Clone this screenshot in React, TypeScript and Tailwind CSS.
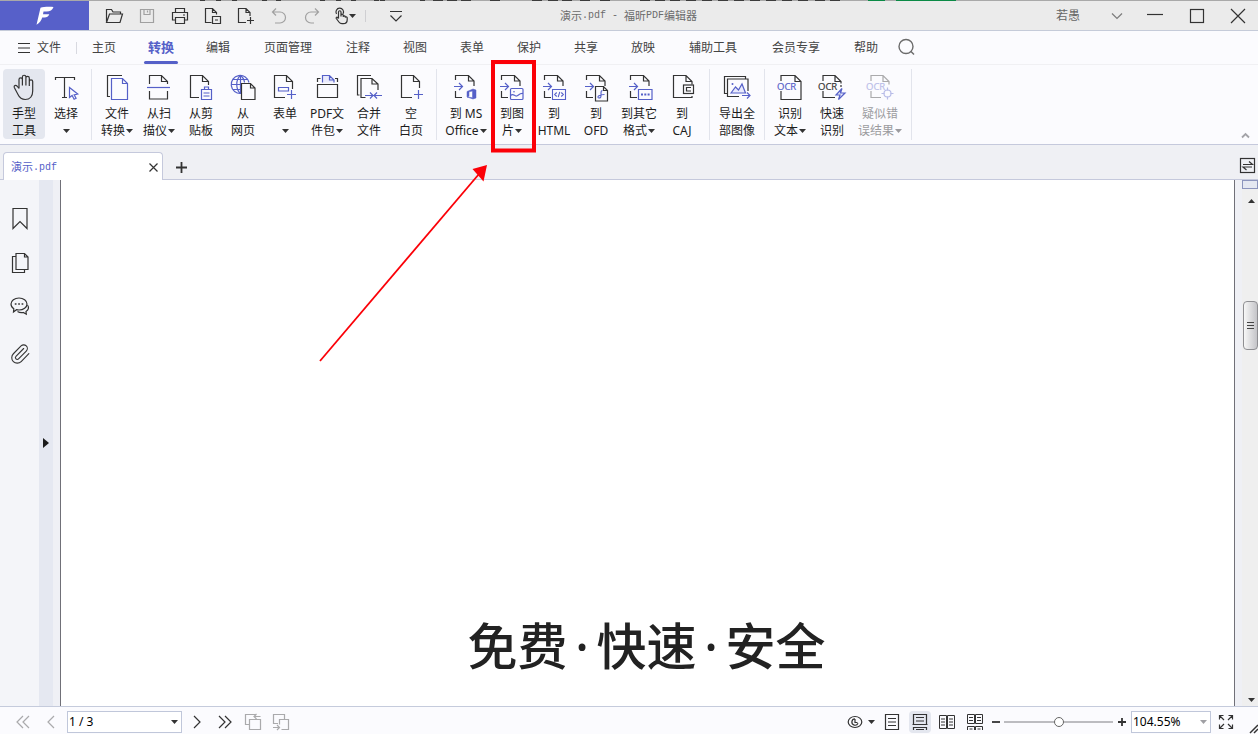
import React from "react";
import { Paperclip } from "lucide-react";

const INK = "#333333";
const BLUE = "#5560c8";

function Icon({ children, size = 28, box = size }: { children: React.ReactNode; size?: number; box?: number }) {
  return (
    <svg
      width={size}
      height={size}
      viewBox={`0 0 ${box} ${box}`}
      fill="none"
      stroke={INK}
      strokeWidth="1.2"
      className="block shrink-0 overflow-visible"
      aria-hidden="true"
    >
      {children}
    </svg>
  );
}

function Caret({ className = "" }: { className?: string }) {
  return (
    <svg width="7" height="4" viewBox="0 0 7 4" className={`inline-block shrink-0 ${className}`} aria-hidden="true">
      <path d="M0 0h7L3.5 4z" fill="currentColor" />
    </svg>
  );
}

/* Sheet outline with a folded corner and an arrow entering from the left */
function ExportSheet({ x = 3.5 }: { x?: number }) {
  return (
    <>
      <path d={`M${x} 7V2.5h13l5.5 5.5v5M${x + 13} 2.5V8h5.5M${x} 18v6.5h6.5`} />
      <path d={`M${x - 1.5} 13.5h8.5M${x + 3.5} 10l3.5 3.5-3.5 3.5`} stroke={BLUE} />
    </>
  );
}

function OcrLabel({ x, color }: { x: number; color: string }) {
  return (
    <text x={x} y="17" fontSize="9.5" fontWeight="500" fontFamily="Open Sans, sans-serif" fill={color} stroke={color} strokeWidth="0.2">
      OCR
    </text>
  );
}

const icons = {
  hand: (
    <Icon>
      <path d="M8 15.500V6.500a1.700 1.700 0 0 1 3.400 0V12.500M11.400 12.500V4a1.750 1.750 0 0 1 3.500 0v8.500M14.900 12.500V5a1.700 1.700 0 0 1 3.400 0v8M18.300 13V8.500a1.700 1.700 0 0 1 3.400 0V18c0 5-2.700 8.500-7.500 8.500-4 0-5.700-1.800-7.200-5L3.300 14.500c-.7-1.800 1.300-3 2.700-1.500L8 15.500" strokeLinejoin="round" transform="translate(1 0)" />
    </Icon>
  ),
  select: (
    <Icon>
      <path d="M3.500 7V4.500h19V7M12.500 4.500v20M10 24.500h5" />
      <path d="M17.500 14.500v10l2.600-2 2 3.800 2-1.100-2-3.400 3.600-.8z" stroke={BLUE} />
    </Icon>
  ),
  convert: (
    <Icon>
      <path d="M19 2.500H4.500v21h2.500" />
      <path d="M8.500 5.500h11l5 5v16h-16zM19.500 5.500v5h5" stroke={BLUE} />
    </Icon>
  ),
  scan: (
    <Icon>
      <path d="M4.500 11V2.500h12l6 6V11M16.500 2.500v6h6M4.500 18v8h18v-8" />
      <path d="M2 14.500h23" stroke={BLUE} />
    </Icon>
  ),
  clipboard: (
    <Icon>
      <path d="M12 24.500H3.500v-22h12l6 6V12M15.500 2.500v6h6" />
      <path d="M14.500 16.500h10v10h-10zM17.500 16.500v-2.500h4v2.500M16.500 20h6M16.500 23h6" stroke={BLUE} />
    </Icon>
  ),
  web: (
    <Icon>
      <g stroke={BLUE}>
        <path d="M12 20.400A9 9 0 1 1 20 9.500M11.500 2.500v18M2.500 11.500h10M4 6.500h15M4 16.500h8" />
        <path d="M11.500 2.500c-5 4-5 14 0 18M11.500 2.500c2.600 2 3.800 4.500 4 7" />
      </g>
      <path d="M12.500 10.500h9l4.500 4.500v11.500h-13.500zM21.500 10.500V15H26" fill="#fbfbfe" />
    </Icon>
  ),
  form: (
    <Icon>
      <path d="M14 24.500H3.500v-22h12l6 6V16M15.500 2.500v6h6" />
      <path d="M7.500 14.500h10v3.500h-10zM20.500 17v9M16 21.500h9" stroke={BLUE} />
    </Icon>
  ),
  portfolio: (
    <Icon>
      <path d="M4.500 11.500h20v13h-20zM4.500 9V5.500h3M22 5.500h2.500V9" />
      <path d="M9.500 9.500v-7h7l4.500 4.500v2.500z" fill="#e9eafc" stroke="none" />
      <path d="M9.500 9.500v-7h7l4.500 4.500v2.500M16.500 2.500V7H21" stroke={BLUE} />
    </Icon>
  ),
  merge: (
    <Icon>
      <path d="M16 2.500H2.500v19.500h2M10.500 24.500H6v-19h11l6 5.500v6M17 5.500V11h6" />
      <path d="M10 22.500h8M15 19.500l3 3-3 3M27 22.500h-8M22 19.500l-3 3 3 3" stroke={BLUE} />
    </Icon>
  ),
  blank: (
    <Icon>
      <path d="M15 24.500H4.500v-22h12l6 6V15M16.500 2.500v6h6" />
      <path d="M21.500 17v9M17 21.500h9" stroke={BLUE} />
    </Icon>
  ),
  office: (
    <Icon>
      <ExportSheet />
      <path d="M15 18.500l6-2.500 3 1v8l-3 1-6-2 5.500.7V18l-3.500.8v4.500L15 24z" fill={BLUE} stroke={BLUE} strokeWidth="0.5" />
    </Icon>
  ),
  image: (
    <Icon>
      <ExportSheet />
      <rect x="12.500" y="15.500" width="12.500" height="11" rx="1" stroke={BLUE} />
      <path d="M12.500 22.500c3-2.500 4 1 6 .5s3-3 6.500-2.500" stroke={BLUE} />
      <circle cx="16" cy="18.700" r="0.800" fill={BLUE} stroke="none" />
    </Icon>
  ),
  html: (
    <Icon>
      <ExportSheet x={4.5} />
      <path d="M12.500 16.500h13v10h-13zM16.700 19.500l-2 2 2 2M21.300 19.500l2 2-2 2M19.800 18.800l-1.600 5.400" stroke={BLUE} strokeWidth="1.1" />
    </Icon>
  ),
  ofd: (
    <Icon>
      <ExportSheet x={4.5} />
      <path d="M13.500 13.500h8l4 4V28h-12zM21.500 13.500v4h4" fill="#fbfbfe" />
      <path d="M20.500 17.500c-1.500 0-1.500 1-1.500 2.500v3c0 1.500-1 2-2 2s-1.500-1.200-.5-2 4-1.500 6-1.500" stroke={BLUE} strokeWidth="1.1" />
    </Icon>
  ),
  other: (
    <Icon>
      <ExportSheet x={5.5} />
      <path d="M13.500 16.500H27v10H13.500z" stroke={BLUE} />
      <path d="M16 21.500h2M19.300 21.500h2M22.600 21.500h2" stroke={BLUE} strokeWidth="1.800" />
    </Icon>
  ),
  caj: (
    <Icon>
      <path d="M24 23v1.500H5.500v-22h12.500l6 6v3M18 2.500v6h6" />
      <rect x="15.500" y="12" width="10" height="8.500" />
      <path d="M23 14.500h-4.500V18H23" />
    </Icon>
  ),
  exportImages: (
    <Icon>
      <path d="M4 20.500H1.500v-17h21V6M16 23.500H4.500V6H25v12" />
      <path d="M8 20l4.500-6 3 3 3.500-6 3.500 9z" fill="#e9eafc" stroke={BLUE} />
      <circle cx="9.500" cy="11" r="1" fill={BLUE} stroke="none" />
      <path d="M19 22.500h8M24 19.500l3 3-3 3" stroke={BLUE} />
    </Icon>
  ),
  ocr: (
    <Icon>
      <path d="M5 8V2.500h14l6 6v18H5V18M19 2.500v6h6" />
      <OcrLabel x={1} color={BLUE} />
    </Icon>
  ),
  quick: (
    <Icon>
      <path d="M5 8V2.500h12l6 6v2M17 2.500v6h6M5 18v6.500h12M23 12v2" />
      <OcrLabel x={0} color={INK} />
      <path d="M24 15.500l-6 6.500h4l-1.500 4.500 6.500-6.500h-4.500z" fill="#e9eafc" stroke={BLUE} />
    </Icon>
  ),
  suspect: (
    <Icon>
      <g opacity="0.4">
        <path d="M5 8V2.500h12l6 6v3M17 2.500v6h6M5 18v6.500h10" />
        <OcrLabel x={0} color={BLUE} />
        <circle cx="21.500" cy="20.500" r="3.500" stroke={BLUE} />
        <path d="M21.500 14.500v3M21.500 23.500v3M15.500 20.500h3M24.500 20.500h3" stroke={BLUE} />
      </g>
    </Icon>
  ),
};

type Tool = {
  icon: keyof typeof icons;
  lines: string[];
  width?: string;
  caret?: boolean;
  active?: boolean;
  disabled?: boolean;
};

const groups: Tool[][] = [
  [
    { icon: "hand", lines: ["手型", "工具"], active: true },
    { icon: "select", lines: ["选择", ""], caret: true },
  ],
  [
    { icon: "convert", lines: ["文件", "转换"], caret: true },
    { icon: "scan", lines: ["从扫", "描仪"], caret: true },
    { icon: "clipboard", lines: ["从剪", "贴板"] },
    { icon: "web", lines: ["从", "网页"] },
    { icon: "form", lines: ["表单", ""], caret: true },
    { icon: "portfolio", lines: ["PDF文", "件包"], caret: true },
    { icon: "merge", lines: ["合并", "文件"] },
    { icon: "blank", lines: ["空", "白页"] },
  ],
  [
    { icon: "office", lines: ["到 MS", "Office"], caret: true, width: "w-[50px]" },
    { icon: "image", lines: ["到图", "片"], caret: true },
    { icon: "html", lines: ["到", "HTML"] },
    { icon: "ofd", lines: ["到", "OFD"] },
    { icon: "other", lines: ["到其它", "格式"], caret: true, width: "w-11" },
    { icon: "caj", lines: ["到", "CAJ"] },
  ],
  [{ icon: "exportImages", lines: ["导出全", "部图像"], width: "w-[46px]" }],
  [
    { icon: "ocr", lines: ["识别", "文本"], caret: true },
    { icon: "quick", lines: ["快速", "识别"] },
    { icon: "suspect", lines: ["疑似错", "误结果"], caret: true, width: "w-[54px]", disabled: true },
  ],
];

function ToolButton({ tool }: { tool: Tool }) {
  return (
    <button
      type="button"
      disabled={tool.disabled}
      className={`flex h-[70px] flex-col items-center rounded-sm pt-1 ${tool.width ?? "w-[42px]"} ${
        tool.active ? "bg-[#e4e7ef]" : ""
      } ${tool.disabled ? "text-[#9b9b9f]" : "text-[#1c1c1c]"}`}
    >
      {icons[tool.icon]}
      <span className="mt-1 flex h-[17px] items-center leading-[17px] whitespace-nowrap">{tool.lines[0]}</span>
      <span className="flex h-[17px] items-center gap-px leading-[17px] whitespace-nowrap">
        {tool.lines[1]}
        {tool.caret && <Caret className={tool.disabled ? "text-[#9b9b9f]" : "text-[#333]"} />}
      </span>
    </button>
  );
}

function TitleButton({ label, children, faded }: { label: string; children: React.ReactNode; faded?: boolean }) {
  return (
    <button type="button" aria-label={label} className={`flex w-[33px] items-center justify-center ${faded ? "opacity-40" : ""}`}>
      <Icon size={18}>{children}</Icon>
    </button>
  );
}

function DesktopEdge() {
  const marks = [200, 216, 232, 262, 276, 320, 336, 351, 374, 380, 420, 433, 447, 461, 490, 532, 548, 562, 580, 600, 640, 655, 670, 686, 702, 718, 734, 750, 766, 782, 798, 815, 830];
  return (
    <svg width="100%" height="1" className="block shrink-0 bg-[#a9a9a9]" aria-hidden="true">
      {marks.map((x) => (
        <rect key={x} x={x} width={x > 420 ? 10 : 5} height="1" fill="#3c3c3c" />
      ))}
      <rect x="868" width="17" height="1" fill="#0a8a45" />
      <rect x="896" width="60" height="1" fill="#0a8a45" />
    </svg>
  );
}

function TitleBar() {
  return (
    <header className="flex h-[30px] shrink-0 items-stretch border-b border-[#c5cbd9] bg-[#ebebeb]">
      <div className="flex w-[89px] items-center justify-center bg-[#5760c9]">
        <svg width="20" height="20" viewBox="0 0 20 20" fill="#fff" aria-label="福昕" role="img">
          <path d="M5.500 1.800C8 .8 13 .6 18.500.9 17.500 4 15 5.300 11.500 5.500L8.500 5.600 8 8.200h6.300c-.9 2.300-2.500 3.200-4.800 3.300L7.200 11.600C6.500 14.500 4.700 17 1.500 18.800z" />
        </svg>
      </div>
      <div className="ml-2 flex">
        <TitleButton label="打开">
          <path d="M1.500 14.500v-12h5l1.500 2.500h7.500v2M1.500 15.500l3-8.500h13l-2.500 8.500z" />
        </TitleButton>
        <TitleButton label="保存" faded>
          <path d="M2.500 2.500h13v13h-13zM6 2.500v5h6v-5M9.500 3.500v2" />
        </TitleButton>
        <TitleButton label="打印">
          <path d="M4.500 5.500v-4h9v4M4.500 13h-3V5.500h15V13h-3M4.500 10.500h9v6h-9zM12 8h2" />
        </TitleButton>
        <TitleButton label="导出">
          <path d="M7.500 15.500h-6v-14h7l4 4v2M8.500 1.500v4h4M8.500 9.500h8v7h-8zM11 13h3" />
        </TitleButton>
        <TitleButton label="新建">
          <path d="M9 15.500H1.500v-14H9l4 4V9M9 1.500v4h4M13.500 10v7M10 13.500h7" />
        </TitleButton>
        <TitleButton label="撤销" faded>
          <path d="M6 1.500L2.500 5 6 8.500M2.500 5H10a5.500 5.500 0 0 1 0 11H5" />
        </TitleButton>
        <TitleButton label="重做" faded>
          <path d="M12 1.500L15.500 5 12 8.500M15.500 5H8a5.500 5.500 0 0 0 0 11h3" />
        </TitleButton>
        <button type="button" aria-label="手势" className="flex w-[33px] items-center justify-center text-[#333]">
          <Icon size={16}>
            <path d="M5.500 10.500V4a1.250 1.250 0 0 1 2.500 0v4.500M8 8.500V7.300a1.100 1.100 0 0 1 2.200 0v1.400a1.100 1.100 0 0 1 2.100 0v.8a1 1 0 0 1 1.900.2v2c0 2.500-1.700 4-3.900 4H9c-1.600 0-2.300-.6-3.100-1.700l-2.600-3.500c-.6-.9.4-1.800 1.300-1l.9 1" />
            <path d="M3.500 6a3.800 3.800 0 1 1 6.600-.2" />
          </Icon>
          <Caret />
        </button>
        <span className="my-auto ml-1 h-3 w-px bg-[#cfcfd2]" />
        <button type="button" aria-label="自定义" className="ml-3 flex w-9 items-center justify-center">
          <Icon size={14}>
            <path d="M1 2.500h12M1.500 6.500L7 12l5.500-5.500" />
          </Icon>
        </button>
      </div>
      <h1 className="my-auto ml-[146px] flex items-center text-[11px] leading-4 whitespace-nowrap text-[#6c6c6c]">
        演示<Mono>.pdf - </Mono>福昕<Mono>PDF</Mono>编辑器
      </h1>
      <div className="ml-auto flex items-stretch">
        <button type="button" className="text-[#666]">若愚</button>
        <button type="button" aria-label="账户菜单" className="ml-[19px] flex w-[35px] items-center justify-center opacity-60">
          <Icon size={10}>
            <path d="M0 2.500l5 5 5-5" />
          </Icon>
        </button>
        <button type="button" aria-label="最小化" className="flex w-[42px] items-center justify-center">
          <Icon size={16}>
            <path d="M0 6.500h16" />
          </Icon>
        </button>
        <button type="button" aria-label="最大化" className="flex w-[42px] items-center justify-center">
          <Icon size={16}>
            <rect x="1.500" y="1.500" width="13" height="13" />
          </Icon>
        </button>
        <button type="button" aria-label="关闭" className="flex w-10 items-center justify-center">
          <Icon size={16}>
            <path d="M1 1l14 14M15 1L1 15" />
          </Icon>
        </button>
      </div>
    </header>
  );
}

function Mono({ children }: { children: React.ReactNode }) {
  return <span className="font-['Liberation_Mono',monospace] text-[10px] whitespace-pre">{children}</span>;
}

const menus = ["主页", "转换", "编辑", "页面管理", "注释", "视图", "表单", "保护", "共享", "放映", "辅助工具", "会员专享", "帮助"];

function MenuBar() {
  return (
    <nav className="flex h-[34px] shrink-0 items-center border-b border-[#f0f0f3] text-[#444]">
      <button type="button" className="ml-[18px] flex items-center gap-[7px]">
        <Icon size={12}>
          <path d="M0 1.500h12M0 6h12M0 10.500h12" strokeWidth="1" />
        </Icon>
        文件
      </button>
      <span className="ml-[15px] h-3 w-px bg-[#d8d9e0]" />
      <div className="ml-[15px] flex h-full gap-[33px]">
        {menus.map((m) => (
          <button
            key={m}
            type="button"
            className={`relative flex items-center justify-center whitespace-nowrap ${m.length > 2 ? "w-[50px]" : "w-6"} ${
              m === "转换" ? "text-[13px] font-bold text-[#5560c8]" : ""
            }`}
          >
            {m}
            {m === "转换" && <span className="absolute -inset-x-[5px] bottom-0 h-[3px] rounded-full bg-[#5560c8]" />}
          </button>
        ))}
      </div>
      <button type="button" aria-label="搜索" className="ml-5">
        <Icon size={17}>
          <circle cx="8" cy="7.500" r="7" stroke="#6b6b6b" strokeWidth="1.400" />
          <path d="M13 12.500l3 3" stroke="#6b6b6b" strokeWidth="1.400" />
        </Icon>
      </button>
    </nav>
  );
}

function Ribbon() {
  return (
    <section aria-label="转换" className="flex h-20 shrink-0 items-start border-b border-[#c5c9dc] pt-1 pl-[3px]">
      {groups.map((tools, i) => (
        <React.Fragment key={i}>
          <div className={i === 2 ? "flex pr-0.5" : "flex"}>
            {tools.map((t) => (
              <ToolButton key={t.icon} tool={t} />
            ))}
          </div>
          <span className="mx-1 h-[71px] w-px bg-[#e2e4ec]" />
        </React.Fragment>
      ))}
      <button type="button" aria-label="收起功能区" className="mr-2 mb-1 ml-auto self-end">
        <Icon size={9}>
          <path d="M1 6.500L4.500 3 8 6.500" stroke="#a3a3a8" strokeWidth="1.800" />
        </Icon>
      </button>
    </section>
  );
}

function TabStrip() {
  return (
    <div className="flex h-[35px] shrink-0 items-end border-b border-[#c5c9dc] bg-[#eff0f4] pl-[3px]">
      <div className="-mb-px flex h-7 w-40 items-center justify-between rounded-t border border-b-0 border-[#c5c9dc] bg-white pt-0.5 pr-1 pl-[7px]">
        <button type="button" className="flex items-center text-[11px] text-[#5560c8]">
          演示<Mono>.pdf</Mono>
        </button>
        <button type="button" aria-label="关闭标签">
          <Icon size={9}>
            <path d="M.5.500l8 8M8.500.500l-8 8" />
          </Icon>
        </button>
      </div>
      <button type="button" aria-label="新建标签" className="mb-1.5 ml-[13px]">
        <Icon size={11}>
          <path d="M5.500 0v11M0 5.500h11" strokeWidth="1.800" />
        </Icon>
      </button>
      <button type="button" aria-label="切换视图" className="mr-[3px] mb-1.5 ml-auto">
        <Icon size={15}>
          <rect x="0.500" y="0.500" width="14" height="14" />
          <path d="M3 6.500h9.500L9 3.500M12 9H3l3.500 3" />
        </Icon>
      </button>
    </div>
  );
}

function Workspace() {
  return (
    <div className="flex min-h-0 flex-1">
      <aside className="flex w-[39px] flex-col items-center bg-[#f4f5f9] pt-[27px] pl-px">
        <button type="button" aria-label="书签" className="mb-[23px]">
          <Icon size={22}>
            <path d="M4 1.500h14v20l-7-7-7 7z" />
          </Icon>
        </button>
        <button type="button" aria-label="页面缩略图" className="mb-[22px]">
          <Icon size={22}>
            <path d="M7 1.500h8.500l3.500 3.500v12.500H7zM15.500 1.500V5H19M7 4.500H3.500v16h12v-3" />
          </Icon>
        </button>
        <button type="button" aria-label="注释" className="mb-[25px]">
          <Icon size={22}>
            <path d="M10 2c4.400 0 8 2.600 8 6s-3.600 6-8 6c-1 0-1.500-.1-2.500-.3L4.500 16l.3-3.200C3 11.700 2 10 2 8c0-3.400 3.600-6 8-6z" />
            <path d="M18.500 9c1.800 2.500 1 5-1.500 6.500l.3 2.700-3-1.700c-2 .4-4.300 0-5.800-1" />
            <path d="M5.800 8h1.700M9.200 8h1.700M12.600 8h1.700" strokeWidth="1.700" />
          </Icon>
        </button>
        <button type="button" aria-label="附件">
          <Paperclip size={22} strokeWidth={1.2} color={INK} />
        </button>
      </aside>
      <button type="button" aria-label="展开面板" className="flex w-3.5 items-center justify-center bg-[#e5e8f1]">
        <svg width="6" height="10" viewBox="0 0 6 10" aria-hidden="true">
          <path d="M0 0v10l6-5z" fill="#1c1c1c" />
        </svg>
      </button>
      <span className="w-[7px] bg-[#eff0f5]" />
      <main className="flex flex-1 flex-col items-center overflow-hidden border-x border-[#707078] bg-white pt-[436px] pr-0.5">
        <p className="flex text-[50px] leading-[60px] font-medium text-[#222]">
          免费<Dot />快速<Dot />安全
        </p>
      </main>
      <span className="w-[7px] bg-[#eff0f5]" />
      <div className="flex w-4 flex-col items-center bg-[#efefef]">
        <span className="h-[9px] w-full border border-[#8d95bd] bg-[#e5e8f1]" />
        <button type="button" aria-label="向上滚动" className="mt-1.5 ml-0.5 flex h-3 items-center">
          <Caret className="rotate-180 text-[#333]" />
        </button>
        <span className="mt-[94px] ml-px flex h-[49px] w-[15px] flex-col items-center justify-center gap-px rounded-sm border border-[#8f8f93] bg-linear-to-r from-[#f7f7f7] to-[#c4c4c8]">
          <i className="h-px w-[7px] bg-[#444]" />
          <i className="mt-px h-px w-[7px] bg-[#444]" />
          <i className="mt-px h-px w-[7px] bg-[#444]" />
        </span>
        <button type="button" aria-label="向下滚动" className="mt-auto ml-0.5 flex h-3 items-center">
          <Caret className="text-[#333]" />
        </button>
      </div>
    </div>
  );
}

function Dot() {
  return (
    <span className="flex w-[29px] justify-center">
      <span>·</span>
    </span>
  );
}

function StatusButton({ label, width = "w-7", faded, active, children }: { label: string; width?: string; faded?: boolean; active?: boolean; children: React.ReactNode }) {
  return (
    <button type="button" aria-label={label} className={`flex h-[22px] items-center justify-center rounded-sm ${width} ${active ? "bg-[#e4e7ef]" : ""} ${faded ? "opacity-40" : ""}`}>
      <Icon size={16}>{children}</Icon>
    </button>
  );
}

function StatusBar() {
  return (
    <footer className="flex h-7 shrink-0 items-center border-t border-[#c5cbdc] pt-[3px]">
      <div className="ml-[9px] flex items-center">
        <StatusButton label="首页" faded>
          <path d="M8 2L2 8l6 6M14 2L8 8l6 6" />
        </StatusButton>
        <StatusButton label="上一页" faded>
          <path d="M11 2L5 8l6 6" />
        </StatusButton>
        <label className="relative ml-0.5 flex items-center">
          <select aria-label="页码" className="h-[22px] w-[115px] appearance-none border border-[#c0c7da] bg-white pl-px text-black">
            <option>1 / 3</option>
          </select>
          <Caret className="pointer-events-none absolute right-1 text-[#333]" />
        </label>
        <StatusButton label="下一页" width="w-[29px]">
          <path d="M5 2l6 6-6 6" />
        </StatusButton>
        <StatusButton label="末页">
          <path d="M2 2l6 6-6 6M8 2l6 6-6 6" />
        </StatusButton>
        <StatusButton label="上一视图" faded>
          <path d="M4 10.500H.500V.500h10M15.500 5.500v10h-11v-10zM15.500 2.500H9M11.500 0L9 2.500 11.500 5" />
        </StatusButton>
        <StatusButton label="下一视图" faded>
          <path d="M5 9.500H.500v-9h11V5M8.500 15.500h7v-10h-9v5M0 13.500h6M4 11l2.500 2.500L4 16" />
        </StatusButton>
      </div>
      <div className="ml-auto flex items-center">
        <button type="button" aria-label="阅读模式" className="mr-1.5 flex items-center gap-1.5 text-[#333]">
          <Icon size={14}>
            <ellipse cx="7" cy="7" rx="6.800" ry="5.500" />
            <path d="M7 3.800a3.200 3.200 0 1 0 3 4.500M7 4v3.500h2.500" />
          </Icon>
          <Caret />
        </button>
        <StatusButton label="单页" width="w-[22px]">
          <path d="M1.500.500h13v15h-13zM4 4.500h8M4 8h8M4 11.500h8" />
        </StatusButton>
        <span className="w-1.5" />
        <StatusButton label="连续" width="w-[22px]" active>
          <path d="M1.500.500h13v10h-13zM4 3.500h8M4 7h8M.500 10.500h15M1.500 16v-2.500h13V16M4 15.500h8" />
        </StatusButton>
        <StatusButton label="双页" width="w-8">
          <path d="M.500 1.500h7v13h-7zM8.500 1.500h7v13h-7zM2 5h4M2 8h4M2 11h4M10 5h4M10 8h4M10 11h4" strokeWidth="1" />
        </StatusButton>
        <StatusButton label="双页连续" width="w-6">
          <path d="M.500.500h7v9h-7zM8.500.500h7v9h-7zM2 3.500h4M2 6.500h4M10 3.500h4M10 6.500h4M.500 16v-3.500h7V16M8.500 16v-3.500h7V16M2.500 15h3M10.500 15h3" strokeWidth="1" />
        </StatusButton>
        <button type="button" aria-label="缩小" className="flex w-[17px] justify-center">
          <Icon size={8}>
            <path d="M0 4h8" strokeWidth="1.800" />
          </Icon>
        </button>
        <input
          type="range"
          aria-label="缩放"
          defaultValue={50}
          className="h-3 w-[109px] appearance-none bg-transparent [&::-webkit-slider-runnable-track]:h-0.5 [&::-webkit-slider-runnable-track]:bg-[#bcbcc0] [&::-webkit-slider-thumb]:-mt-1 [&::-webkit-slider-thumb]:size-2.5 [&::-webkit-slider-thumb]:appearance-none [&::-webkit-slider-thumb]:rounded-full [&::-webkit-slider-thumb]:border [&::-webkit-slider-thumb]:border-[#666] [&::-webkit-slider-thumb]:bg-white"
        />
        <button type="button" aria-label="放大" className="flex w-[18px] justify-center">
          <Icon size={8}>
            <path d="M0 4h8M4 0v8" strokeWidth="1.800" />
          </Icon>
        </button>
        <label className="relative flex items-center">
          <select aria-label="缩放比例" className="h-[22px] w-20 appearance-none border border-[#c0c7da] bg-white pl-px text-black">
            <option>104.55%</option>
          </select>
          <Caret className="pointer-events-none absolute right-1 text-[#a0a0a4]" />
        </label>
        <button type="button" aria-label="全屏" className="ml-[7px]">
          <Icon size={16}>
            <path d="M1.500 5.500v-4h4M1.500 1.500L6 6M10.500 1.500h4v4M14.500 1.500L10 6M1.500 10.500v4h4M1.500 14.500L6 10M10.500 14.500h4v-4M14.500 14.500L10 10" />
          </Icon>
        </button>
        <span className="ml-4 self-end">
          <Icon size={8}>
            <path d="M0 8l8-8M4 8l4-4" strokeWidth="1.500" />
          </Icon>
        </span>
      </div>
    </footer>
  );
}

function Callout() {
  return (
    <svg width="220" height="305" viewBox="0 0 220 305" className="pointer-events-none absolute top-[60px] left-[319px]" aria-hidden="true">
      <rect x="174" y="2" width="41" height="88.500" fill="none" stroke="#fb0007" strokeWidth="4" />
      <path d="M1 301L160 114" stroke="#fb0007" strokeWidth="1.800" />
      <path d="M168 105l-3.500 16.500L153.500 109z" fill="#fb0007" />
    </svg>
  );
}

export default function App() {
  return (
    <div className="relative flex h-screen flex-col overflow-hidden bg-[#fbfbfe] font-['Noto_Sans','Noto_Sans_CJK_SC',sans-serif] text-[12px]">
      <DesktopEdge />
      <TitleBar />
      <MenuBar />
      <Ribbon />
      <TabStrip />
      <Workspace />
      <StatusBar />
      <Callout />
    </div>
  );
}
